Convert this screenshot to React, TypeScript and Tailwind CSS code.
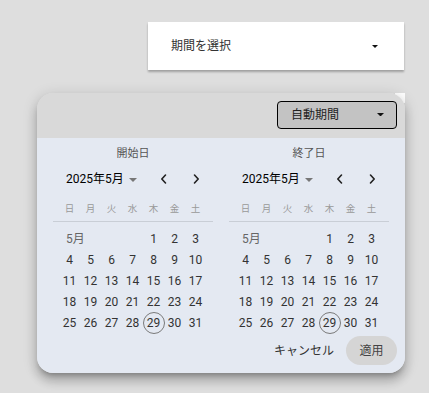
import React from "react";

const WEEK = ["日", "月", "火", "水", "木", "金", "土"];

function Chevron({ dir }: { dir: "left" | "right" }) {
  return (
    <svg width="12" height="12" viewBox="0 0 12 12" fill="none">
      {dir === "left" ? (
        <path d="M7.5 2 L3.8 6 L7.5 10" stroke="#222" strokeWidth="1.6" strokeLinecap="round" strokeLinejoin="round" />
      ) : (
        <path d="M4.5 2 L8.2 6 L4.5 10" stroke="#222" strokeWidth="1.6" strokeLinecap="round" strokeLinejoin="round" />
      )}
    </svg>
  );
}

function Tri({ w, h, color }: { w: number; h: number; color: string }) {
  return (
    <svg width={w} height={h} viewBox="0 0 10 5">
      <path d="M0 0 L10 0 L5 5 Z" fill={color} />
    </svg>
  );
}

function Calendar({ title }: { title: string }) {
  const rows: (number | null)[][] = [
    [4, 5, 6, 7, 8, 9, 10],
    [11, 12, 13, 14, 15, 16, 17],
    [18, 19, 20, 21, 22, 23, 24],
    [25, 26, 27, 28, 29, 30, 31],
  ];
  return (
    <div className="w-[160px] flex flex-col">
      <div className="h-[16px] flex items-center justify-center text-[11px] text-[#555] leading-none">{title}</div>
      <div className="mt-[4px] h-[28px] flex items-center relative">
        <div className="pl-[13px] flex items-center text-[12px] text-black leading-none">
          <span>2025年5月</span>
          <span className="ml-[5px] mt-[1px]">
            <Tri w={8} h={4} color="#777" />
          </span>
        </div>
        <div className="absolute left-[105px] top-[8px]">
          <Chevron dir="left" />
        </div>
        <div className="absolute left-[137px] top-[8px]">
          <Chevron dir="right" />
        </div>
      </div>
      <div className="mt-[6px] h-[22px] grid grid-cols-[repeat(7,21px)] pl-[6px] items-start">
        {WEEK.map((d) => (
          <div key={d} className="h-[20px] flex items-center justify-center text-[9.5px] text-[#999] leading-none">
            {d}
          </div>
        ))}
      </div>
      <div className="h-px bg-[#c9ced6]" />
      <div className="mt-[6px] grid grid-cols-[repeat(7,21px)] pl-[6px] text-[12px] text-[#333] leading-none">
        <div className="col-span-4 h-[21px] flex items-center pl-[7px] text-[#666]">5月</div>
        {[1, 2, 3].map((n) => (
          <div key={n} className="h-[21px] flex items-center justify-center">
            {n}
          </div>
        ))}
        {rows.flat().map((n, i) => (
          <div key={i} className="h-[21px] flex items-center justify-center">
            {n === 29 ? (
              <div className="w-[22px] h-[22px] shrink-0 rounded-full border border-[#7a7a7a] flex items-center justify-center">
                {n}
              </div>
            ) : (
              n
            )}
          </div>
        ))}
      </div>
    </div>
  );
}

export default function App() {
  return (
    <div
      className="w-[429px] h-[393px] bg-[#dedede] overflow-hidden flex flex-col"
      style={{ fontFamily: "Roboto, 'Noto Sans CJK JP', sans-serif" }}
    >
      <div className="ml-[148px] mt-[22px] w-[256px] h-[48px] bg-white shadow-[0_2px_2px_rgba(0,0,0,0.28)] flex items-center pl-[23px] pr-[26px] justify-between">
        <span className="text-[12px] text-[#333] leading-none">期間を選択</span>
        <Tri w={6} h={3} color="#111" />
      </div>
      <div className="ml-[37px] mt-[23px] w-[368px] relative">
        <div className="absolute right-0 top-0 w-[10px] h-[10px] bg-white" />
        <div className="relative rounded-[16px] overflow-hidden shadow-[0_5px_5px_-3px_rgba(0,0,0,0.25),0_8px_10px_1px_rgba(0,0,0,0.16),0_3px_14px_2px_rgba(0,0,0,0.12)]">
          <div className="h-[45px] bg-[#d9d9d9] flex items-center justify-end pr-[8px]">
            <div className="w-[120px] h-[28px] mt-[-2px] bg-[#c3c3c3] border border-black rounded-[4px] flex items-center justify-between pl-[13px] pr-[12px]">
              <span className="text-[12px] text-[#222] leading-none">自動期間</span>
              <Tri w={7} h={3.5} color="#111" />
            </div>
          </div>
          <div className="bg-[#e4e9f2] pt-[7px] pb-[8px]">
            <div className="flex px-[16px] gap-[16px]">
              <Calendar title="開始日" />
              <Calendar title="終了日" />
            </div>
            <div className="mt-[3px] flex items-center justify-end pr-[8px]">
              <span className="text-[12px] text-[#333] leading-none mr-[12px]">キャンセル</span>
              <div className="w-[51px] h-[29px] rounded-full bg-[#d5d5d5] flex items-center justify-center text-[12px] text-[#444] leading-none">
                適用
              </div>
            </div>
          </div>
        </div>
      </div>
    </div>
  );
}
